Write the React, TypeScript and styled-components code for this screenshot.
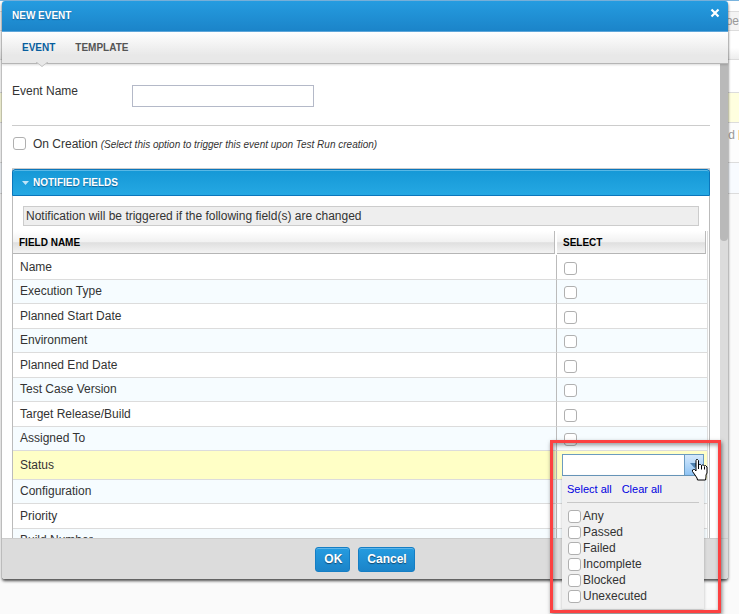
import React, { useState } from "react";
import styled, { createGlobalStyle, css } from "styled-components";

const GlobalStyle = createGlobalStyle`
  *, *::before, *::after { box-sizing: border-box; }
  html, body { margin: 0; height: 100%; overflow: hidden; }
  body {
    background: #fafafa;
    color: #333;
    font: 12px/16px Arial, "Liberation Sans", sans-serif;
  }
`;

const Screen = styled.div`
  position: relative;
  height: 100vh;
  padding-top: 1px;
  overflow: hidden;
`;

const Backdrop = styled.div`
  position: absolute;
  inset: 0;
  border-top: 1px solid #7ab4de;
  color: #9a9a9a;
  background: #fafafa;
`;

const BackRow = styled.div<{ $h: number; $bg: string }>`
  display: flex;
  align-items: center;
  justify-content: flex-end;
  height: ${(p) => p.$h}px;
  background: ${(p) => p.$bg};
  border-bottom: 1px solid #dcdcdc;
`;

const BackStatus = styled(BackRow)`
  align-items: flex-start;
  padding-top: 4px;
`;

const BackMark = styled.span`
  width: 1px;
  height: 10px;
  margin: 3px 0 0 3px;
  background: #ffe0a0;
`;

const Dialog = styled.section`
  position: relative;
  display: flex;
  flex-direction: column;
  height: calc(100vh - 36px);
  margin: 0 11px 0 2px;
  background: #fff;
  border-radius: 3px;
  box-shadow: 0 2px 3px rgba(0, 0, 0, 0.7);
`;

const TitleBar = styled.header`
  display: flex;
  flex: none;
  align-items: center;
  justify-content: space-between;
  height: 31px;
  padding: 0 8px 0 10px;
  border-bottom: 1px solid #5fa8dc;
  border-radius: 3px 3px 0 0;
  background: linear-gradient(#259ce0, #1b84c9);
  color: #fff;
`;

const Title = styled.h1`
  margin: 0;
  font-size: 10px;
  line-height: 16px;
  font-weight: bold;
  text-shadow: 0 1px 1px #14629a;
`;

const CloseButton = styled.button`
  display: flex;
  align-items: center;
  height: 16px;
  margin-bottom: 6px;
  padding: 0;
  border: 0;
  background: none;
`;

const Tabs = styled.nav`
  display: flex;
  flex: none;
  gap: 20px;
  height: 32px;
  padding: 0 20px;
  background: linear-gradient(#fff, #e8e8e8 75%);
  border-bottom: 1px solid #b5b5b5;
  box-shadow: 0 1px 2px rgba(0, 0, 0, 0.15);
  z-index: 1;
`;

const Tab = styled.button<{ $active?: boolean }>`
  position: relative;
  padding: 0;
  border: 0;
  background: none;
  color: ${(p) => (p.$active ? "#075e9e" : "#555")};
  font: bold 10px/31px Arial, "Liberation Sans", sans-serif;
`;

const Notch = styled.svg`
  position: absolute;
  left: 50%;
  top: 30px;
  margin-left: -3px;
`;

const Body = styled.div`
  display: flex;
  flex: 1;
  min-height: 0;
  overflow: hidden;
`;

const Content = styled.div`
  flex: 1;
  min-width: 0;
  padding: 0 10px;
`;

const ScrollTrack = styled.div`
  flex: none;
  width: 8px;
  background: #dcdcdc;
`;

const ScrollThumb = styled.div`
  height: 177px;
  border-radius: 0 0 4px 4px;
  background: #b9b9b9;
`;

const NameRow = styled.div`
  display: flex;
  align-items: flex-start;
  height: 62px;
  padding-top: 19px;
  border-bottom: 1px solid #ccc;
`;

const NameLabel = styled.label`
  width: 120px;
`;

const NameInput = styled.input`
  width: 182px;
  height: 22px;
  margin-top: 2px;
  border: 1px solid #b4b9c8;
  background: #fff;
`;

const CreationRow = styled.label`
  display: flex;
  align-items: center;
  height: 43px;
  padding: 0 0 7px 1px;
  border-bottom: 1px solid #ccc;
`;

const CheckBox = styled.input.attrs({ type: "checkbox" })`
  appearance: none;
  flex: none;
  display: block;
  width: 13px;
  height: 13px;
  margin: 0;
  border: 1px solid #b0b0b0;
  border-radius: 3px;
  background: #fff;
  &:checked { background: #1b84c9; }
`;

const CreationText = styled.span`
  margin: 1px 3px 0 7px;
`;

const Hint = styled.em`
  margin-top: 2px;
  font-size: 10px;
`;

const Panel = styled.section`
  border: 1px solid #bbb;
  border-top: 0;
`;

const PanelHead = styled.button`
  display: flex;
  align-items: center;
  gap: 4px;
  width: calc(100% + 2px);
  height: 27px;
  margin: 0 -1px;
  padding: 0 9px;
  border: 1px solid #0b76bb;
  border-radius: 3px 3px 0 0;
  background: linear-gradient(#1598d6, #25a8e3);
  box-shadow: inset 0 1px #58b8e6;
  color: #fff;
  font: bold 10px/16px Arial, "Liberation Sans", sans-serif;
  text-shadow: 0 1px 1px #0a5f97;
`;

const Notice = styled.p`
  margin: 10px;
  margin-bottom: 5px;
  padding: 1px 2px;
  border: 1px solid #ccc;
  background: #eee;
  line-height: 16px;
`;

const Grid = styled.table`
  width: calc(100% - 1px);
  border-spacing: 0;
  table-layout: fixed;
  border-right: 1px solid #ddd;
`;

const FieldCol = styled.col``;
const SelectCol = styled.col`
  width: 150px;
`;

const HeadCell = styled.th`
  height: 24px;
  padding: 0 1px 1px 0;
  &:first-child { padding-right: 2px; }
`;

const HeadBox = styled.div`
  height: 23px;
  padding: 0 5px 0 6px;
  border-right: 1px solid #bbb;
  border-bottom: 1px solid #b5b5b5;
  background: linear-gradient(#fff, #f1f1f1 50%, #dfdfdf 53%, #f3f3f3);
  color: #000;
  font-size: 10px;
  line-height: 23px;
  text-align: left;
`;

const Cell = styled.td`
  padding: 0 7px;
  border-bottom: 1px solid #dcdcdc;
  line-height: 16px;
  &:first-child { border-right: 1px solid #bbb; }
`;

const BoxCell = styled(Cell)`
  padding: 7px 7px 0;
  vertical-align: top;
`;

const ComboCell = styled(Cell)`
  padding: 0 3px 0 5px;
`;

const Row = styled.tr<{ $active?: boolean }>`
  height: 25px;
  background: #fff;
  &:nth-child(even) {
    height: 24px;
    background: #f6fcff;
  }
  &:nth-child(even) ${Cell} { padding-bottom: 1px; }
  &:nth-child(even) ${BoxCell} { padding-top: 6px; }
  ${(p) =>
    p.$active &&
    css`
      height: 29px;
      background: #ffffc6;
    `}
`;

const Combo = styled.div`
  display: flex;
  height: 22px;
  border: 1px solid #6b9bc0;
`;

const ComboInput = styled.input`
  flex: 1;
  min-width: 0;
  padding: 0 4px;
  border: 0;
  background: #fff;
`;

const ComboButton = styled.button`
  display: flex;
  align-items: center;
  justify-content: center;
  width: 19px;
  padding: 0;
  border: 0;
  border-left: 1px solid #6b9bc0;
  background: linear-gradient(#d5e9fc, #8fc4f5);
`;

const Footer = styled.footer`
  display: flex;
  flex: none;
  justify-content: center;
  gap: 8px;
  height: 41px;
  padding: 8px 0 0;
  border-top: 1px solid #ccc;
  border-radius: 0 0 3px 3px;
  background: #dcdcdc;
`;

const ActionButton = styled.button`
  height: 25px;
  padding: 0 7px 2px 8px;
  border: 1px solid #157ec4;
  border-radius: 3px;
  background: linear-gradient(#259ce0, #1b84c9);
  box-shadow: inset 0 1px #5fb6ea;
  color: #fff;
  font: bold 12px/20px Arial, "Liberation Sans", sans-serif;
  text-shadow: 0 1px 1px #14496f;
`;

const Menu = styled.div`
  position: absolute;
  top: 475px;
  right: 24px;
  width: 142px;
  height: 133px;
  padding: 5px;
  background: #f0f0f0;
  box-shadow: 0 1px 3px rgba(0, 0, 0, 0.25);
`;

const MenuLinks = styled.div`
  display: flex;
  gap: 10px;
  height: 22px;
  margin-bottom: 5px;
  border-bottom: 1px solid #c8c8c8;
`;

const MenuLink = styled.a`
  color: #0000e0;
  font-size: 11px;
  line-height: 16px;
  text-decoration: none;
`;

const Option = styled.label`
  display: flex;
  align-items: center;
  gap: 2px;
  height: 16px;
  padding-left: 1px;
`;

const Highlight = styled.div`
  position: absolute;
  top: 439px;
  right: 7px;
  width: 171px;
  height: 173px;
  border: 3px solid #fc4141;
  box-shadow: 1px 2px 4px rgba(0, 0, 0, 0.5), inset 1px 2px 4px rgba(0, 0, 0, 0.4);
  pointer-events: none;
`;

const Pointer = styled.svg`
  position: absolute;
  top: 458px;
  right: 20px;
  pointer-events: none;
`;

const FIELDS = [
  "Name",
  "Execution Type",
  "Planned Start Date",
  "Environment",
  "Planned End Date",
  "Test Case Version",
  "Target Release/Build",
  "Assigned To",
  "Status",
  "Configuration",
  "Priority",
  "Build Number",
];

const STATUSES = ["Any", "Passed", "Failed", "Incomplete", "Blocked", "Unexecuted"];

export default function App() {
  const [chosen, setChosen] = useState<string[]>([]);
  const toggle = (s: string) =>
    setChosen((c) => (c.includes(s) ? c.filter((x) => x !== s) : [...c, s]));

  return (
    <Screen>
      <GlobalStyle />
      <Backdrop aria-hidden="true">
        <BackRow $h={11} $bg="#fff" />
        <BackRow $h={19} $bg="#f4f4f4">spe</BackRow>
        <BackRow $h={29} $bg="linear-gradient(#fff 60%, #eee)" />
        <BackRow $h={33} $bg="#fff" />
        <BackRow $h={30} $bg="#ffffdf" />
        <BackStatus $h={40} $bg="#fdfdfd">
          <span>d</span>
          <BackMark />
        </BackStatus>
        <BackRow $h={31} $bg="#f8fbff" />
      </Backdrop>

      <Dialog role="dialog" aria-label="New event">
        <TitleBar>
          <Title>NEW EVENT</Title>
          <CloseButton aria-label="Close">
            <svg width="10" height="10" viewBox="0 0 10 10">
              <path d="M1.500 1.500l7 7M8.500 1.500l-7 7" stroke="#fff" strokeWidth="2.2" />
            </svg>
          </CloseButton>
        </TitleBar>
        <Tabs>
          <Tab $active>
            EVENT
            <Notch width="12" height="6" viewBox="0 0 12 6">
              <path d="M0 0h12L6 5z" fill="#e8e8e8" />
              <path d="M0 .5h1l5 4 5-4h1" fill="none" stroke="#c4c4c4" />
            </Notch>
          </Tab>
          <Tab>TEMPLATE</Tab>
        </Tabs>

        <Body>
          <Content>
            <NameRow>
              <NameLabel htmlFor="event-name">Event Name</NameLabel>
              <NameInput id="event-name" type="text" />
            </NameRow>
            <CreationRow>
              <CheckBox />
              <CreationText>On Creation</CreationText>
              <Hint>(Select this option to trigger this event upon Test Run creation)</Hint>
            </CreationRow>

            <Panel>
              <PanelHead aria-expanded="true">
                <svg width="7" height="4" viewBox="0 0 7 4">
                  <path d="M0 0h7L3.5 4z" fill="#bfe4f8" />
                </svg>
                NOTIFIED FIELDS
              </PanelHead>
              <Notice>Notification will be triggered if the following field(s) are changed</Notice>
              <Grid>
                <colgroup>
                  <FieldCol />
                  <SelectCol />
                </colgroup>
                <thead>
                  <tr>
                    <HeadCell><HeadBox>FIELD NAME</HeadBox></HeadCell>
                    <HeadCell><HeadBox>SELECT</HeadBox></HeadCell>
                  </tr>
                </thead>
                <tbody>
                  {FIELDS.map((name) => (
                    <Row key={name} $active={name === "Status"}>
                      <Cell>{name}</Cell>
                      {name === "Status" ? (
                        <ComboCell>
                          <Combo>
                            <ComboInput type="text" aria-label="Status values" />
                            <ComboButton aria-label="Show status values">
                              <svg width="9" height="5" viewBox="0 0 9 5">
                                <path d="M0 0h9L4.5 5z" fill="#4c7fae" />
                              </svg>
                            </ComboButton>
                          </Combo>
                        </ComboCell>
                      ) : (
                        <BoxCell>
                          <CheckBox aria-label={name} />
                        </BoxCell>
                      )}
                    </Row>
                  ))}
                </tbody>
              </Grid>
            </Panel>
          </Content>
          <ScrollTrack>
            <ScrollThumb />
          </ScrollTrack>
        </Body>

        <Footer>
          <ActionButton>OK</ActionButton>
          <ActionButton>Cancel</ActionButton>
        </Footer>

        <Menu>
          <MenuLinks>
            <MenuLink href="#all" onClick={() => setChosen(STATUSES)}>Select all</MenuLink>
            <MenuLink href="#none" onClick={() => setChosen([])}>Clear all</MenuLink>
          </MenuLinks>
          {STATUSES.map((s) => (
            <Option key={s}>
              <CheckBox checked={chosen.includes(s)} onChange={() => toggle(s)} />
              {s}
            </Option>
          ))}
        </Menu>
        <Highlight />
        <Pointer width="17" height="22" viewBox="0 0 17 22">
          <path
            d="M5.500.5h1l1 1v5l1-1h1l1 1 1-.5h1l1 1 1-.5 1.500 1.500v6l-1 2v2l-.5 3h-8l-.5-2-2-3-2.500-3.500v-1.500l1-.5h1l1.500 1.500V1.500z"
            fill="#fff"
            stroke="#000"
          />
          <path d="M7.500 6v4M10.500 6.500v4M13.500 7.500v3" stroke="#000" />
        </Pointer>
      </Dialog>
    </Screen>
  );
}
